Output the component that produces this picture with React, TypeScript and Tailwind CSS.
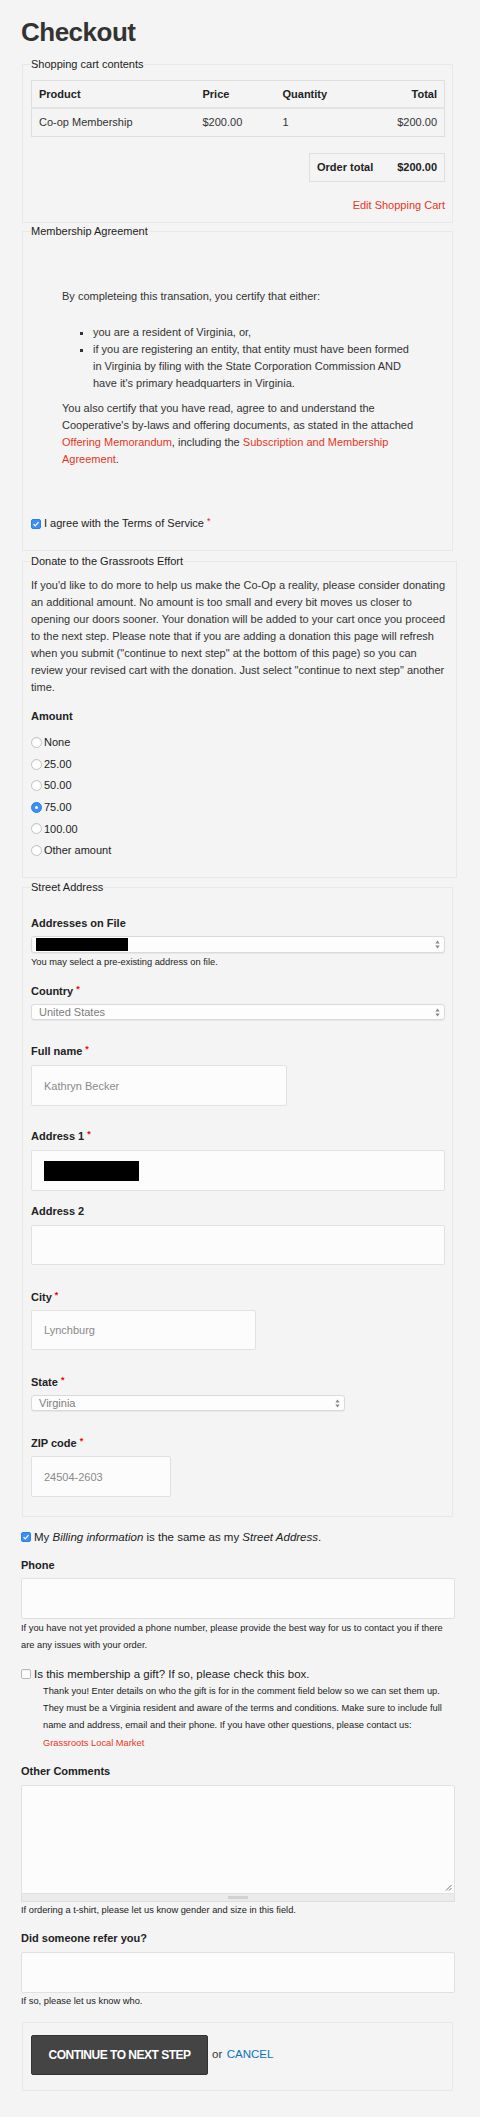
import React from "react";

// Checkout page: cart summary, membership agreement, donation, address and comments.

const RED = "text-[#e8341f]";

function Req() {
  return <span className="ml-[3px] align-top text-[9px] leading-[12px] text-[#f00]">*</span>;
}

function Label({ children, req = false }: { children: React.ReactNode; req?: boolean }) {
  return (
    <div className="text-[11px] font-bold leading-[17px] text-[#222]">
      {children}
      {req && <Req />}
    </div>
  );
}

function Arrows() {
  return (
    <svg width="5" height="9" viewBox="0 0 5 9" className="shrink-0">
      <path d="M2.5 0.5 L4.7 3.6 L0.3 3.6 Z" fill="#8a8a8a" />
      <path d="M2.5 8.5 L4.7 5.4 L0.3 5.4 Z" fill="#8a8a8a" />
    </svg>
  );
}

function SelectBox({ className = "", children }: { className?: string; children?: React.ReactNode }) {
  return (
    <div
      className={`flex items-center justify-between rounded-[3px] border border-[#dadada] bg-[#fdfdfd] pr-[4px] shadow-[0_1px_1px_rgba(0,0,0,0.06)] ${className}`}
    >
      <div className="flex items-center">{children}</div>
      <Arrows />
    </div>
  );
}

function TextBox({ className = "", children }: { className?: string; children?: React.ReactNode }) {
  return (
    <div
      className={`flex items-center rounded-[2px] border border-[#e1e1e1] bg-[#fcfcfc] pl-[12px] text-[11px] text-[#8a8a8a] ${className}`}
    >
      {children}
    </div>
  );
}

function CheckOn() {
  return (
    <span className="flex h-[10px] w-[10px] shrink-0 items-center justify-center rounded-[2px] border border-[#2d7fe8] bg-[#3a90f7]">
      <svg viewBox="0 0 10 10" className="h-[8px] w-[8px]">
        <path d="M2 5.2 L4.1 7.3 L8.2 2.6" fill="none" stroke="white" strokeWidth="1.6" />
      </svg>
    </span>
  );
}

function CheckOff() {
  return (
    <span className="h-[10px] w-[10px] shrink-0 rounded-[2px] border border-[#b9b9b9] bg-white shadow-[inset_0_1px_1px_rgba(0,0,0,0.06)]" />
  );
}

function Radio({ on = false }: { on?: boolean }) {
  if (on) {
    return (
      <span className="flex h-[11px] w-[11px] shrink-0 items-center justify-center rounded-full border border-[#2d7fe8] bg-[#3a90f7]">
        <span className="h-[3px] w-[3px] rounded-full bg-white" />
      </span>
    );
  }
  return (
    <span className="h-[11px] w-[11px] shrink-0 rounded-full border border-[#c2c2c2] bg-white shadow-[inset_0_1px_1px_rgba(0,0,0,0.06)]" />
  );
}

function Legend({ children }: { children: React.ReactNode }) {
  return <legend className="text-[11px] leading-[17px] text-[#222]">{children}</legend>;
}

const amounts = ["None", "25.00", "50.00", "75.00", "100.00", "Other amount"];

export default function App() {
  return (
    <div className="min-h-[2117px] bg-[#f4f4f4] pb-[24px] pl-[21px] pr-[25px] pt-[17px] font-['Liberation_Sans',Arial,sans-serif] text-[11px] text-[#333]">
      <h1 className="text-[26px] font-bold leading-[30px] tracking-[-0.5px] text-[#333]">Checkout</h1>

      {/* cart */}
      <fieldset className="ml-[1px] mr-[2px] mt-[8.5px] border border-[#e8e8e8] pb-[8px] pl-[8px] pr-[7px] pt-[7px]">
        <Legend>Shopping cart contents</Legend>
        <table className="w-full table-fixed border-collapse border border-[#dedede] text-[11px]">
          <colgroup>
            <col className="w-[164px]" />
            <col className="w-[80px]" />
            <col />
            <col />
          </colgroup>
          <thead>
            <tr className="h-[28px] border-b-2 border-[#e4e4e4]">
              <th className="px-[7px] text-left font-bold text-[#222]">Product</th>
              <th className="px-[7px] text-left font-bold text-[#222]">Price</th>
              <th className="px-[7px] text-left font-bold text-[#222]">Quantity</th>
              <th className="px-[7px] text-right font-bold text-[#222]">Total</th>
            </tr>
          </thead>
          <tbody>
            <tr className="h-[28px]">
              <td className="px-[7px]">Co-op Membership</td>
              <td className="px-[7px]">$200.00</td>
              <td className="px-[7px]">1</td>
              <td className="px-[7px] text-right">$200.00</td>
            </tr>
          </tbody>
        </table>
        <div className="mt-[16px] flex justify-end">
          <div className="flex h-[29px] w-[136px] items-center justify-between border border-[#dedede] px-[7px] font-bold text-[#222]">
            <span>Order total</span>
            <span>$200.00</span>
          </div>
        </div>
        <div className={`mt-[15.5px] text-right leading-[17px] ${RED}`}>Edit Shopping Cart</div>
      </fieldset>

      {/* agreement */}
      <fieldset className="ml-[1px] mr-[2px] border border-[#e8e8e8] pb-[18px] pl-[8px] pr-[7px] pt-[48px]">
        <Legend>Membership Agreement</Legend>
        <div className="ml-[31px] w-[358px] leading-[17px]">
          <p>By completeing this transation, you certify that either:</p>
          <ul className="mt-[19px] list-[square] pl-[31px] pr-[5px] marker:text-[#333]">
            <li>you are a resident of Virginia, or,</li>
            <li>
              if you are registering an entity, that entity must have been formed in Virginia by filing with the
              State Corporation Commission AND have it's primary headquarters in Virginia.
            </li>
          </ul>
          <p className="mt-[8px]">
            You also certify that you have read, agree to and understand the Cooperative's by-laws and offering
            documents, as stated in the attached <span className={RED}>Offering Memorandum</span>, including the{" "}
            <span className={RED}>Subscription and Membership Agreement</span>.
          </p>
        </div>
        <div className="mt-[47px] flex items-center gap-[3px] leading-[17px] text-[#222]">
          <CheckOn />
          <span>
            I agree with the Terms of Service
            <Req />
          </span>
        </div>
      </fieldset>

      {/* donation */}
      <fieldset className="ml-[1px] mr-[2px] mt-[2px] border border-[#e8e8e8] pb-[16px] pl-[8px] pr-[7px] pt-[7px]">
        <Legend>Donate to the Grassroots Effort</Legend>
        <p className="w-[418px] leading-[17px]">
          If you'd like to do more to help us make the Co-Op a reality, please consider donating an additional
          amount. No amount is too small and every bit moves us closer to opening our doors sooner. Your donation
          will be added to your cart once you proceed to the next step. Please note that if you are adding a
          donation this page will refresh when you submit ("continue to next step" at the bottom of this page) so
          you can review your revised cart with the donation. Just select "continue to next step" another time.
        </p>
        <div className="mt-[12px]">
          <Label>Amount</Label>
        </div>
        <div className="mt-[6.7px] flex flex-col">
          {amounts.map((a) => (
            <div key={a} className="flex h-[21.6px] items-center gap-[2px] text-[#222]">
              <Radio on={a === "75.00"} />
              <span>{a}</span>
            </div>
          ))}
        </div>
      </fieldset>

      {/* street address */}
      <fieldset className="ml-[1px] mr-[2px] mt-[1px] border border-[#e8e8e8] pb-[18.5px] pl-[8px] pr-[7px] pt-[19px]">
        <Legend>Street Address</Legend>
        <Label>Addresses on File</Label>
        <SelectBox className="mt-[4px] h-[17px] w-full">
          <span className="ml-[4px] h-[13px] w-[92px] bg-black" />
        </SelectBox>
        <div className="mt-[2px] text-[9.3px] leading-[14px] text-[#222]">You may select a pre-existing address on file.</div>

        <div className="mt-[13.5px]">
          <Label req>Country</Label>
        </div>
        <SelectBox className="mt-[4.5px] h-[16px] w-full">
          <span className="pl-[7px] text-[11px] text-[#7d7d7d]">United States</span>
        </SelectBox>

        <div className="mt-[22.5px]">
          <Label req>Full name</Label>
        </div>
        <TextBox className="mt-[5.5px] h-[41px] w-[256px]">Kathryn Becker</TextBox>

        <div className="mt-[21.5px]">
          <Label req>Address 1</Label>
        </div>
        <TextBox className="mt-[5.5px] h-[41px] w-full pl-[8px]">
          <span className="h-[20px] w-[95px] bg-black" />
        </TextBox>

        <div className="mt-[11.5px]">
          <Label>Address 2</Label>
        </div>
        <TextBox className="mt-[5.5px] h-[40px] w-full" />

        <div className="mt-[23.5px]">
          <Label req>City</Label>
        </div>
        <TextBox className="mt-[4.5px] h-[40px] w-[225px]">Lynchburg</TextBox>

        <div className="mt-[23.5px]">
          <Label req>State</Label>
        </div>
        <SelectBox className="mt-[4.5px] h-[16px] w-[314px]">
          <span className="pl-[7px] text-[11px] text-[#7d7d7d]">Virginia</span>
        </SelectBox>

        <div className="mt-[23.5px]">
          <Label req>ZIP code</Label>
        </div>
        <TextBox className="mt-[4.5px] h-[41px] w-[140px]">24504-2603</TextBox>
      </fieldset>

      <div className="mt-[12px] flex items-center gap-[3px] text-[11.5px] leading-[17px] text-[#222]">
        <CheckOn />
        <span>
          My <em>Billing information</em> is the same as my <em>Street Address</em>.
        </span>
      </div>

      <div className="mt-[11px]">
        <Label>Phone</Label>
      </div>
      <TextBox className="mt-[4.5px] h-[41px] w-full" />
      <p className="mt-[0.5px] text-[9.3px] leading-[17.5px] text-[#222]">
        If you have not yet provided a phone number, please provide the best way for us to contact you if there are
        any issues with your order.
      </p>

      <div className="mt-[11px] flex items-center gap-[3px] text-[11.5px] leading-[17px] text-[#222]">
        <CheckOff />
        <span>Is this membership a gift? If so, please check this box.</span>
      </div>
      <p className="pl-[22px] text-[9.3px] leading-[17.3px] text-[#222]">
        Thank you! Enter details on who the gift is for in the comment field below so we can set them up. They must
        be a Virginia resident and aware of the terms and conditions. Make sure to include full name and address,
        email and their phone. If you have other questions, please contact us:
        <br />
        <span className={RED}>Grassroots Local Market</span>
      </p>

      <div className="mt-[11px]">
        <Label>Other Comments</Label>
      </div>
      <div className="mt-[5.5px] flex h-[109px] w-full items-end justify-end rounded-t-[2px] border border-[#e1e1e1] bg-[#fcfcfc] p-[2px]">
        <svg width="7" height="7" viewBox="0 0 7 7">
          <path d="M6.5 1 L1 6.5 M6.5 4 L4 6.5" stroke="#777" strokeWidth="1" />
        </svg>
      </div>
      <div className="flex h-[8px] w-full items-center justify-center border border-t-0 border-[#dedede] bg-[#ebebeb]">
        <span className="h-[3px] w-[20px] bg-[#d2d2d2]" />
      </div>
      <div className="text-[9.3px] leading-[16px] text-[#222]">
        If ordering a t-shirt, please let us know gender and size in this field.
      </div>

      <div className="mt-[12px]">
        <Label>Did someone refer you?</Label>
      </div>
      <TextBox className="mt-[4.5px] h-[41px] w-full" />
      <div className="mt-[0.5px] text-[9.3px] leading-[17px] text-[#222]">If so, please let us know who.</div>

      <div className="ml-[1px] mr-[2px] mt-[11.5px] flex items-center border border-[#e8e8e8] pb-[15px] pl-[8px] pt-[12px]">
        <div className="flex h-[40px] w-[177px] items-center justify-center rounded-[2px] border border-[#333] bg-[#444] text-[12px] font-bold tracking-[-0.5px] text-white">
          CONTINUE TO NEXT STEP
        </div>
        <span className="ml-[4px] text-[11.5px] text-[#333]">or</span>
        <span className="ml-[4.5px] text-[11.5px] text-[#0a72c4]">CANCEL</span>
      </div>
    </div>
  );
}
